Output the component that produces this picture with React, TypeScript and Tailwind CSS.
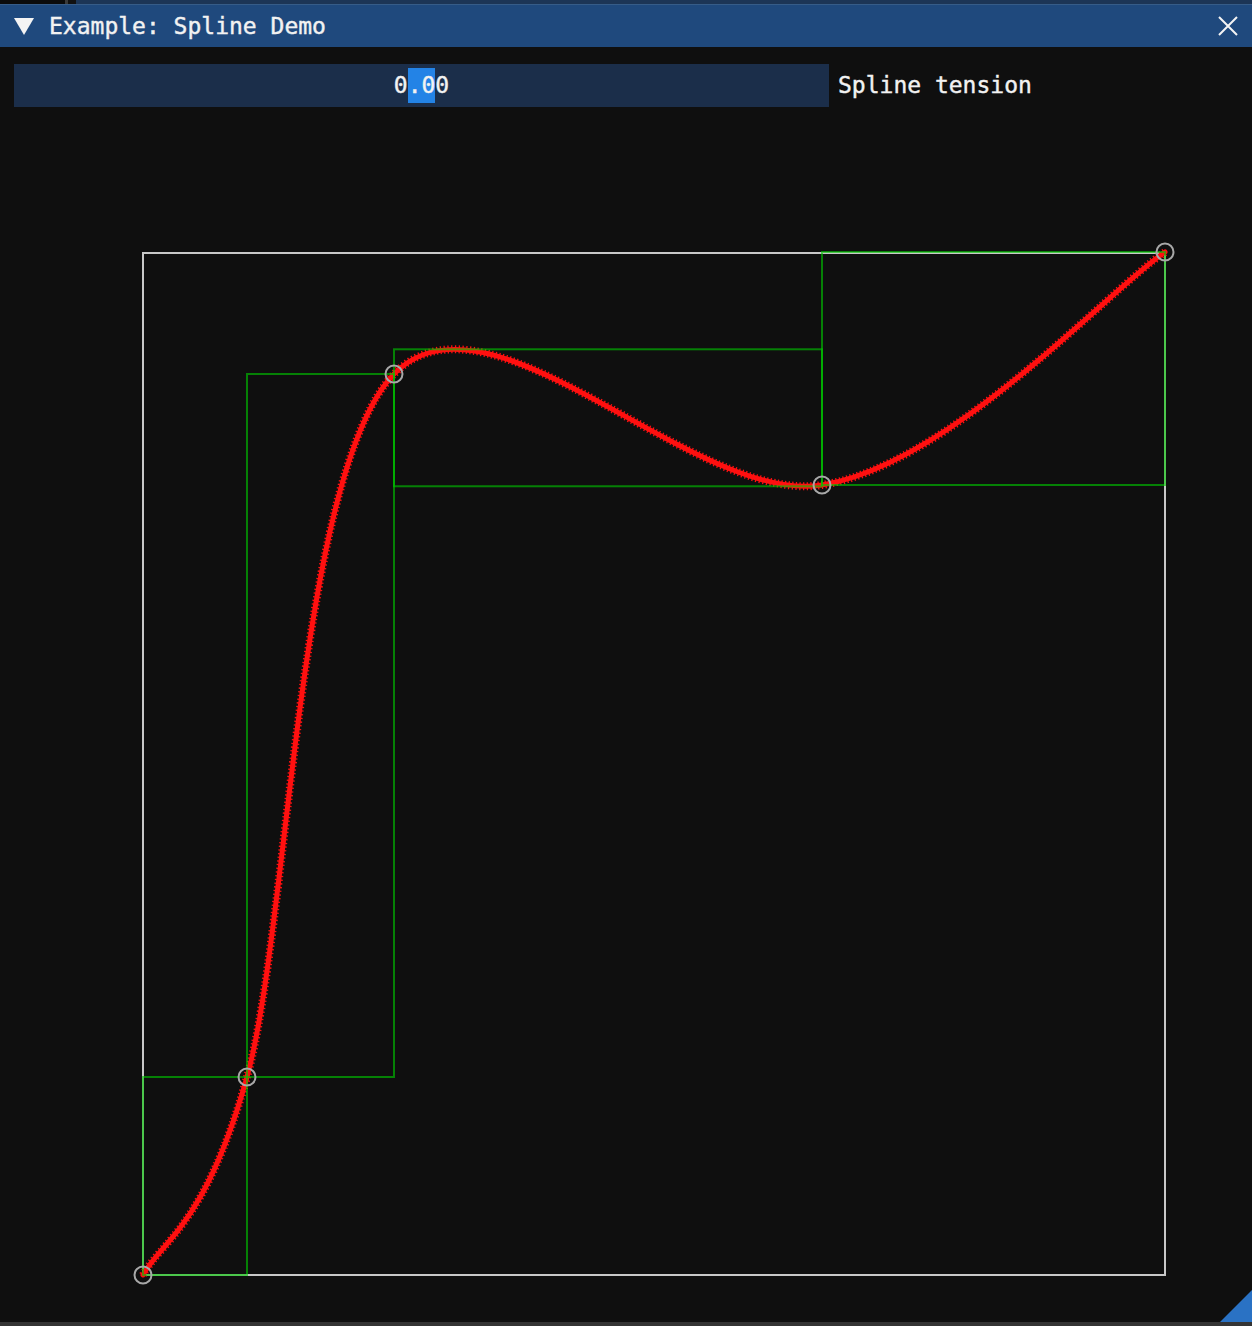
import React from 'react';

type Pt = [number, number];

// control points of the spline, in page coordinates
const points: Pt[] = [
  [143, 1275],
  [247, 1077],
  [394, 374],
  [822, 485],
  [1165, 252],
];

// Catmull-Rom (tension 0) turned into cubic bezier segments
function segments(pts: Pt[]) {
  const out: [Pt, Pt, Pt, Pt][] = [];
  for (let i = 0; i < pts.length - 1; i++) {
    const p0 = pts[Math.max(i - 1, 0)];
    const p1 = pts[i];
    const p2 = pts[i + 1];
    const p3 = pts[Math.min(i + 2, pts.length - 1)];
    const c1: Pt = [p1[0] + (p2[0] - p0[0]) / 6, p1[1] + (p2[1] - p0[1]) / 6];
    const c2: Pt = [p2[0] - (p3[0] - p1[0]) / 6, p2[1] - (p3[1] - p1[1]) / 6];
    out.push([p1, c1, c2, p2]);
  }
  return out;
}

const segs = segments(points);
const curvePath =
  `M ${points[0][0]} ${points[0][1]} ` +
  segs.map(([, a, b, c]) => `C ${a[0]} ${a[1]} ${b[0]} ${b[1]} ${c[0]} ${c[1]}`).join(' ');

// bounding box of each segment, sampled
const boxes = segs.map(([p, a, b, c]) => {
  let minX = Infinity, minY = Infinity, maxX = -Infinity, maxY = -Infinity;
  for (let k = 0; k <= 100; k++) {
    const t = k / 100;
    const u = 1 - t;
    const x = u * u * u * p[0] + 3 * u * u * t * a[0] + 3 * u * t * t * b[0] + t * t * t * c[0];
    const y = u * u * u * p[1] + 3 * u * u * t * a[1] + 3 * u * t * t * b[1] + t * t * t * c[1];
    minX = Math.min(minX, x); maxX = Math.max(maxX, x);
    minY = Math.min(minY, y); maxY = Math.max(maxY, y);
  }
  return { minX, minY, maxX, maxY };
});

const mono = { fontFamily: '"DejaVu Sans Mono", "Liberation Mono", monospace' };

export default function App() {
  return (
    <div className="w-[1252px] h-[1326px] bg-[#0f0f0f] flex flex-col overflow-hidden text-[#f2f2f2]" style={mono}>
      {/* strip above the window */}
      <div className="h-[4px] flex shrink-0">
        <div className="w-[65px] bg-[#0b0b0b]" />
        <div className="w-[3px] bg-[#3a3a3a]" />
        <div className="w-[8px] bg-[#111111]" />
        <div className="flex-1 bg-[#1c3556]" />
      </div>

      {/* Title bar */}
      <div className="h-[43px] shrink-0 flex items-center bg-[#1f497d] border-t border-[#365c88] pl-[14px] pr-[13px]">
        <svg width="20" height="18" viewBox="0 0 20 18" className="shrink-0">
          <polygon points="0,1 20,1 10,18" fill="#f4f4f4" />
        </svg>
        <span className="ml-[15px] text-[23px] leading-none font-medium [-webkit-text-stroke:0.4px_#f2f2f2]">Example: Spline Demo</span>
        <svg width="22" height="22" viewBox="0 0 22 22" className="ml-auto">
          <path d="M2 2 L20 20 M20 2 L2 20" stroke="#f4f4f4" strokeWidth="2" />
        </svg>
      </div>

      {/* Tension input */}
      <div className="flex items-center pt-[17px] pl-[14px] shrink-0">
        <div className="w-[815px] h-[43px] bg-[#1b2e4a] flex items-center justify-center">
          <span className="text-[23px] leading-[35px] flex [-webkit-text-stroke:0.4px_#f2f2f2]">
            <span>0</span>
            <span className="bg-[#2383e6] inline-block h-[35px]">.0</span>
            <span>0</span>
          </span>
        </div>
        <span className="ml-[9px] text-[23px] leading-none [-webkit-text-stroke:0.4px_#f2f2f2]">Spline tension</span>
      </div>

      {/* Spline canvas */}
      <svg width="1252" height="1215" viewBox="0 107 1252 1215" className="shrink-0 block">
        <rect x="143" y="253" width="1022" height="1022" fill="none" stroke="#c8c8c8" strokeWidth="2" />
        <path d={curvePath} fill="none" stroke="#ff1010" strokeWidth="5" strokeLinecap="round" />
        <path d={curvePath} fill="none" stroke="#ff1010" strokeWidth="8" strokeDasharray="1.3 2.4" />
        {boxes.map((b, i) => (
          <rect
            key={i}
            x={b.minX}
            y={b.minY}
            width={b.maxX - b.minX}
            height={b.maxY - b.minY}
            fill="none"
            stroke="rgba(0,200,0,0.62)"
            strokeWidth="2"
          />
        ))}
        {points.map((p, i) => (
          <circle key={i} cx={p[0]} cy={p[1]} r="8.5" fill="none" stroke="#a8a8a8" strokeWidth="2" />
        ))}
        <polygon points="1220,1322 1252,1290 1252,1322" fill="#2a72c4" />
      </svg>
      <div className="h-[4px] bg-[#343434] shrink-0" />
    </div>
  );
}
